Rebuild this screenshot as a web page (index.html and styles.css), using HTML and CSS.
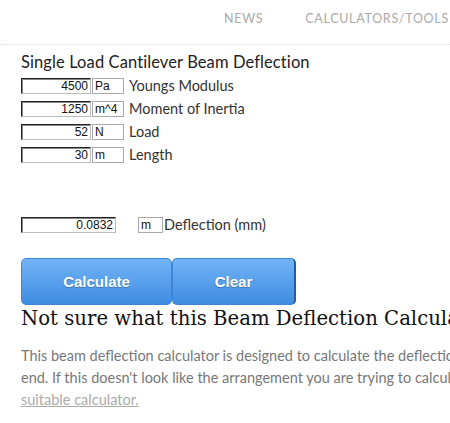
FILE: index.html
```html
<!DOCTYPE html>
<html>
<head>
    <title>Single Load Cantilever Beam Deflection</title>
    <link rel="stylesheet" href="styles.css">
</head>
<body>
    <header class="topbar">
        <nav class="nav">
            <a href="#">NEWS</a>
            <a href="#">CALCULATORS/TOOLS</a>
        </nav>
    </header>
    <div class="container">
        <h3 class="calc-title">Single Load Cantilever Beam Deflection</h3>
        <form id="beam-form" class="calc">
            <div class="row">
                <input type="text" class="val" value="4500">
                <span class="unit">Pa</span>
                <label>Youngs Modulus</label>
            </div>
            <div class="row">
                <input type="text" class="val" value="1250">
                <span class="unit">m^4</span>
                <label>Moment of Inertia</label>
            </div>
            <div class="row">
                <input type="text" class="val" value="52">
                <span class="unit">N</span>
                <label>Load</label>
            </div>
            <div class="row">
                <input type="text" class="val" value="30">
                <span class="unit">m</span>
                <label>Length</label>
            </div>

            <div class="row result">
                <input type="text" class="val wide" value="0.0832">
                <span class="unit small">m</span>
                <label>Deflection (mm)</label>
            </div>

            <div class="buttons">
                <button type="button" class="btn calc-btn">Calculate</button>
                <button type="reset" class="btn clear-btn">Clear</button>
            </div>
        </form>

        <h2>Not sure what this Beam Deflection Calculator is for?</h2>
        <p class="intro">This beam deflection calculator is designed to calculate the deflection of a cantilever beam with a single load at one<br>
            end. If this doesn't look like the arrangement you are trying to calculate, have a look at our other calculators to find a<br>
            <a href="#">suitable calculator.</a></p>
    </div>
</body>
</html>
```

FILE: styles.css
```css
html, body {
    overflow-x: hidden;
}
body {
    font-family: Lato, 'Open Sans', sans-serif;
    background-color: #ffffff;
    color: #222;
    margin: 0;
    padding: 0;
}
.topbar {
    width: 450px;
    height: 44px;
    border-bottom: 1px dotted #ddd;
}
.nav {
    display: flex;
    gap: 42px;
    padding: 11px 0 0 224px;
    white-space: nowrap;
}
.nav a {
    color: #aaa;
    font-size: 12.5px;
    letter-spacing: 0.7px;
    text-decoration: none;
}
.container {
    width: 900px;
    padding: 0 21px;
}
.calc-title {
    font-size: 16.5px;
    font-weight: normal;
    color: #222;
    margin: 7px 0 2px;
    letter-spacing: 0.1px;
}
.row {
    display: flex;
    align-items: center;
    height: 23px;
}
.val {
    width: 70px;
    height: 16px;
    box-sizing: border-box;
    padding: 0 2px;
    border-style: solid;
    border-width: 1px;
    border-color: #222 #bbb #bbb #222;
    box-shadow: inset 1px 1px 0 #888;
    text-align: right;
    font-family: 'Liberation Sans', Arial, sans-serif;
    font-size: 12px;
    color: #111;
}
.val.wide {
    width: 95px;
    margin-right: 21px;
}
.unit {
    width: 32px;
    height: 16px;
    box-sizing: border-box;
    margin-left: 1px;
    padding-left: 2px;
    border: 1px solid #aaa;
    font-family: 'Liberation Sans', Arial, sans-serif;
    font-size: 12px;
    line-height: 14px;
    color: #111;
}
.unit.small {
    width: 25px;
}
.row label {
    margin-left: 5px;
    font-size: 14.5px;
    color: #333;
}
.result label {
    margin-left: 1px;
}
.result {
    margin-top: 47px;
}
.buttons {
    display: flex;
    margin-top: 22px;
}
.btn {
    height: 47px;
    border: 1px solid #3d86d6;
    border-radius: 5px;
    background: linear-gradient(#72b4f7, #3e8ce0);
    color: #fff;
    font-family: 'Liberation Sans', Arial, sans-serif;
    font-weight: bold;
    font-size: 15px;
    text-shadow: 0 1px 1px rgba(0, 0, 0, 0.25);
    cursor: pointer;
}
.calc-btn {
    width: 151px;
}
.clear-btn {
    width: 124px;
    margin-left: 0;
    border-right: 2px solid #1f5fa8;
}
h2 {
    font-family: 'DejaVu Serif', 'Liberation Serif', serif;
    font-weight: normal;
    font-size: 19.7px;
    color: #111;
    margin: 0 0 12px;
    white-space: nowrap;
    line-height: 28px;
}
.intro {
    font-size: 14.5px;
    color: #777;
    line-height: 22px;
    margin: 0;
    white-space: nowrap;
}
.intro a {
    color: #aaa;
}
```
